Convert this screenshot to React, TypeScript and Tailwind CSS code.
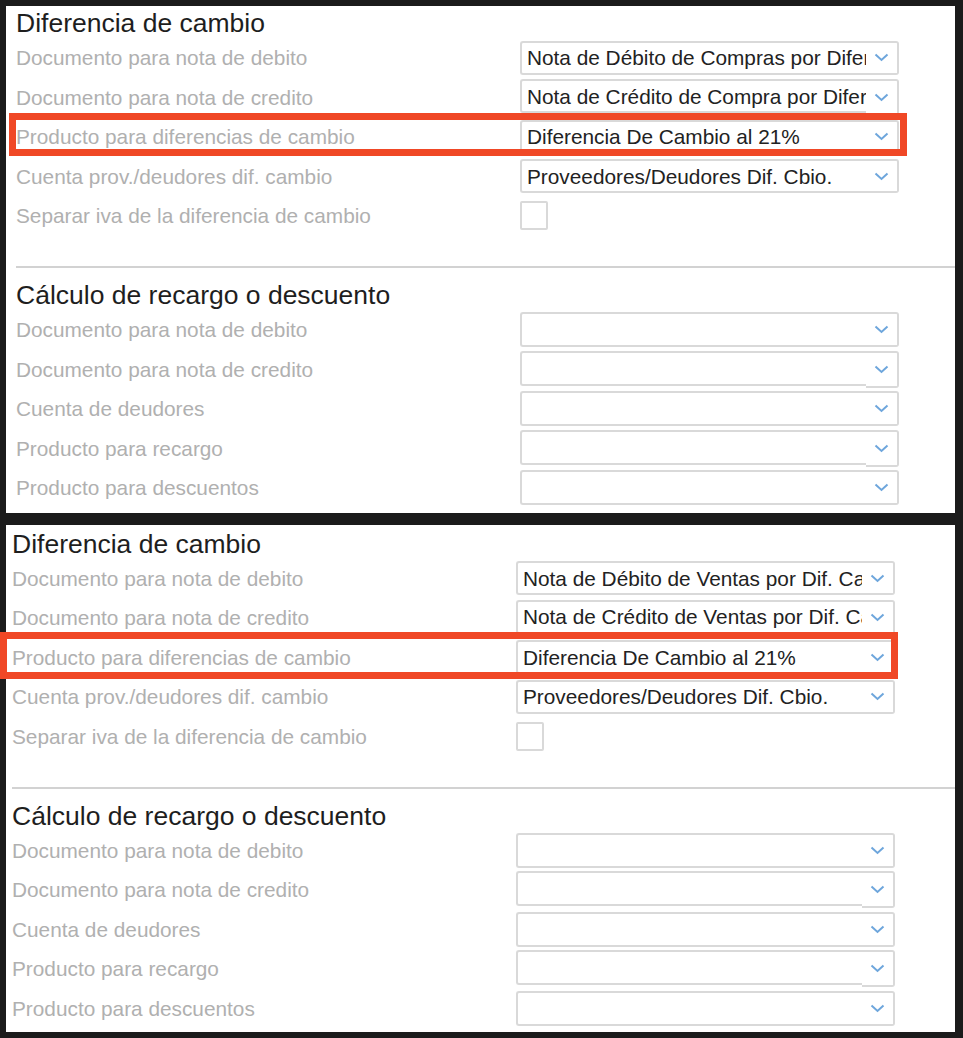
import React from 'react'

type Field = { label: string; value?: string; check?: boolean; notch?: boolean; mark?: boolean }

const cambioVentas: Field[] = [
  { label: 'Documento para nota de debito', value: 'Nota de Débito de Compras por Diferencia de Cambio' },
  { label: 'Documento para nota de credito', value: 'Nota de Crédito de Compra por Diferencia de Cambio', notch: true },
  { label: 'Producto para diferencias de cambio', value: 'Diferencia De Cambio al 21%', mark: true },
  { label: 'Cuenta prov./deudores dif. cambio', value: 'Proveedores/Deudores Dif. Cbio.' },
  { label: 'Separar iva de la diferencia de cambio', check: true },
]

const cambioVentas2: Field[] = [
  { label: 'Documento para nota de debito', value: 'Nota de Débito de Ventas por Dif. Cambio' },
  { label: 'Documento para nota de credito', value: 'Nota de Crédito de Ventas por Dif. Cambio', notch: true },
  { label: 'Producto para diferencias de cambio', value: 'Diferencia De Cambio al 21%', mark: true },
  { label: 'Cuenta prov./deudores dif. cambio', value: 'Proveedores/Deudores Dif. Cbio.' },
  { label: 'Separar iva de la diferencia de cambio', check: true },
]

const recargo: Field[] = [
  { label: 'Documento para nota de debito', value: '' },
  { label: 'Documento para nota de credito', value: '', notch: true },
  { label: 'Cuenta de deudores', value: '' },
  { label: 'Producto para recargo', value: '', notch: true },
  { label: 'Producto para descuentos', value: '' },
]

function Chevron() {
  return (
    <svg width="15" height="9" viewBox="0 0 15 9">
      <polyline points="1.5,1.5 7.5,7 13.5,1.5" fill="none" stroke="#6ea6dc" strokeWidth="2" />
    </svg>
  )
}

function Select({ value, notch }: { value: string; notch?: boolean }) {
  const empty = value === ''
  const left = empty ? 'h-[35px]' : 'h-[34px]'
  const right = empty ? (notch ? 'h-[37px]' : 'h-[35px]') : notch ? 'h-[36px]' : 'h-[34px]'
  return (
    <div className="flex items-start w-[379px]">
      <div
        className={`flex-1 min-w-0 ${left} flex items-center pl-[5px] border-2 border-r-0 border-[#d9d9d9] rounded-l-[3px] overflow-hidden whitespace-nowrap text-[20.8px] text-[#222]`}
      >
        {value}
      </div>
      <div
        className={`w-[33px] ${right} flex items-center justify-center border-2 border-l-0 border-[#d9d9d9] rounded-r-[3px]`}
      >
        <Chevron />
      </div>
    </div>
  )
}

function Section({ title, fields, markClass }: { title: string; fields: Field[]; markClass: string }) {
  return (
    <>
      <h2 className="h-[29px] leading-[29px] text-[26.5px] text-[#1e1e1e]">{title}</h2>
      {fields.map(f => (
        <div key={f.label} className="relative flex items-center h-[39.5px]">
          {f.mark && <div className={`absolute ${markClass} w-[898px] border-[7px] border-[#f04826]`} />}
          <span className="w-[504px] shrink-0 text-[20.8px] text-[#b0b0b0] whitespace-nowrap">{f.label}</span>
          {f.check ? (
            <div className="w-[28px] h-[29px] border-2 border-[#d9d9d9] rounded-[2px]" />
          ) : (
            <Select value={f.value ?? ''} notch={f.notch} />
          )}
        </div>
      ))}
    </>
  )
}

function Panel({ first, pad }: { first: Field[]; pad: 'a' | 'b' }) {
  const a = pad === 'a'
  return (
    <div className={`bg-white h-[507px] ${a ? 'pt-[3px] pl-[10px]' : 'pt-[4.5px] pl-[6px]'}`}>
      <Section
        title="Diferencia de cambio"
        fields={first}
        markClass={a ? 'top-[-4px] h-[43px] left-[-7px]' : 'top-[-5.5px] h-[47px] left-[-12px]'}
      />
      <div className="mt-[30.5px] mb-[13px] h-[2px] bg-[#d2d2d2]" />
      <Section title="Cálculo de recargo o descuento" fields={recargo} markClass="" />
    </div>
  )
}

export default function App() {
  return (
    <div
      className="w-[963px] h-[1038px] bg-[#1b1b1b] pt-[6px] pl-[6px] pr-[8px] flex flex-col gap-[12px]"
      style={{ fontFamily: '"Liberation Sans", Arial, sans-serif' }}
    >
      <Panel first={cambioVentas} pad="a" />
      <Panel first={cambioVentas2} pad="b" />
    </div>
  )
}
